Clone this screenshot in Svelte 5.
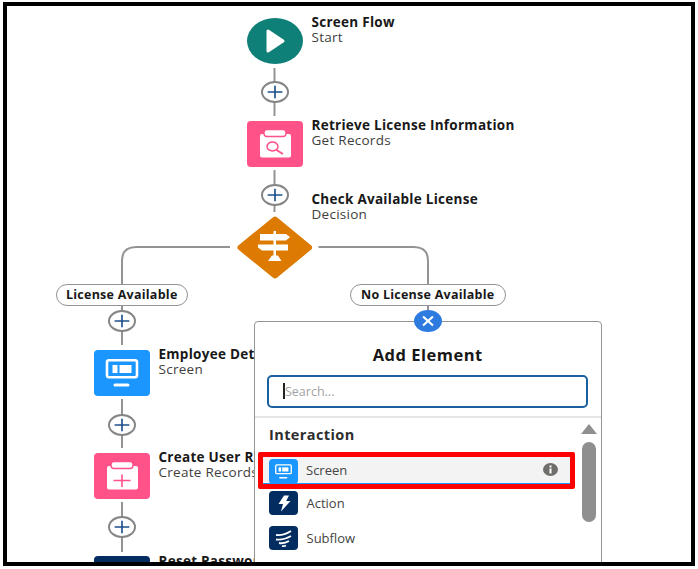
<script lang="ts">
  // canvas coordinates below are page pixels; the frame's inner corner sits at (7, 6)
  const ox = 7;
  const oy = 6;

  const pluses = [
    [274.5, 92], [274.5, 195],
    [122, 321], [122, 424.5], [122, 527]
  ];

  const labels = [
    { x: 311.5, y: 15, title: 'Screen Flow', sub: 'Start' },
    { x: 311.5, y: 118, title: 'Retrieve License Information', sub: 'Get Records' },
    { x: 311.5, y: 192, title: 'Check Available License', sub: 'Decision' },
    { x: 158.5, y: 347, title: 'Employee Details', sub: 'Screen' },
    { x: 158.5, y: 450, title: 'Create User Record', sub: 'Create Records' },
    { x: 158.5, y: 554, title: 'Reset Password', sub: '' }
  ];

  const pos = (x: number, y: number) => `left:${x - ox}px;top:${y - oy}px`;
</script>

{#snippet monitor()}
  <rect x="13" y="10.2" width="30" height="17" rx="2" fill="none" stroke="#fff" stroke-width="2.6" />
  <rect x="18.5" y="15" width="5" height="8" fill="#fff" />
  <rect x="25.5" y="15" width="12" height="8" fill="#fff" />
  <rect x="19.5" y="33.5" width="16" height="3" rx="1.5" fill="#fff" />
{/snippet}

{#snippet clipboard()}
  <rect x="13" y="13" width="31" height="23.500" rx="2" fill="#fff" />
  <rect x="17" y="8.500" width="22" height="7" rx="3" fill="#fff" stroke="#fe5288" stroke-width="1.4" />
{/snippet}

<div class="frame">
  <svg class="wires" viewBox="7 6 684 556" width="684" height="556" fill="none">
    <path d="M274.5 68V116M274.5 170V212" />
    <path d="M230 247H136Q122 247 122 261V284M122 306V345M122 399V448M122 502V552" />
    <path d="M318.5 247H414Q428 247 428 261V284M428 306V312" />
  </svg>

  <div class="node start" style={pos(246.5, 18)}>
    <svg viewBox="0 0 56 46" width="56" height="46"><path d="M21 13V33L36 23Z" fill="#fff" stroke="#fff" stroke-width="3" stroke-linejoin="round" /></svg>
  </div>

  <div class="node pink" style={pos(246.5, 121)}>
    <svg viewBox="0 0 56 46" width="56" height="46">
      {@render clipboard()}
      <ellipse cx="25.500" cy="25.500" rx="5.500" ry="4.500" fill="none" stroke="#fe5288" stroke-width="1.5" />
      <path d="M29.500 29L36 33" stroke="#fe5288" stroke-width="1.7" />
    </svg>
  </div>

  <svg class="node diamond" style={pos(237, 215.5)} viewBox="0 0 76 63" width="76" height="63">
    <path d="M38 3.500L72 31.500L38 59.500L3.500 31.500Z" fill="#dd7a01" stroke="#dd7a01" stroke-width="6" stroke-linejoin="round" />
    <path d="M23 18H49L53 21L49 24.500H23ZM21 28.500H51V34.500H25L21 31.500ZM36.500 15H39V40H36.500ZM31 45L35 39.500H41L44.500 45Z" fill="#fff" />
  </svg>

  <div class="node blue" style={pos(93.5, 349.5)}>
    <svg viewBox="0 0 56 46" width="56" height="46">{@render monitor()}</svg>
  </div>

  <div class="node pink" style={pos(93.5, 452.5)}>
    <svg viewBox="0 0 56 46" width="56" height="46">
      {@render clipboard()}
      <path d="M19.500 27.500H36.500M28 21.500V34" stroke="#fe5288" stroke-width="1.6" />
    </svg>
  </div>

  <div class="node navy" style={pos(93.5, 556)}></div>

  {#each pluses as [x, y]}
    <button class="plus" style={pos(x - 14, y - 11)} aria-label="Add element">
      <svg viewBox="0 0 28 22" width="24" height="18"><path d="M5 11H23M14 3.500V18.500" stroke="#1c4f8c" stroke-width="2" /></svg>
    </button>
  {/each}

  {#each labels as l}
    <div class="label" style={pos(l.x, l.y)}>
      <div class="title">{l.title}</div>
      {#if l.sub}<div class="sub">{l.sub}</div>{/if}
    </div>
  {/each}

  <div class="pill left" style={pos(55.5, 283.5)}>License Available</div>
  <div class="pill right" style={pos(350, 283.5)}>No License Available</div>

  <div class="popover" style={pos(254, 321)}>
    <h2>Add Element</h2>
    <div class="search">
      <span class="caret"></span>
      <input placeholder="Search..." />
    </div>
    <div class="list">
      <div class="items">
        <h3>Interaction</h3>
        <div class="row active">
          <svg class="tile sky" viewBox="0 0 56 46" width="29" height="25">{@render monitor()}</svg>
          <span>Screen</span>
          <svg class="info" viewBox="0 0 15 13" width="15" height="13">
            <ellipse cx="7.500" cy="6.500" rx="7.500" ry="6.500" fill="#706e6b" />
            <rect x="6.500" y="5.500" width="2" height="5" fill="#fff" />
            <rect x="6.500" y="2.500" width="2" height="2" fill="#fff" />
          </svg>
        </div>
        <div class="row">
          <svg class="tile dark" viewBox="0 0 29 24" width="29" height="24">
            <path d="M15 4.500H20L17.200 10H21.500L12 20.500L14 13H9.500Z" fill="#fff" />
          </svg>
          <span>Action</span>
        </div>
        <div class="row">
          <svg class="tile dark" viewBox="0 0 29 24" width="29" height="24" fill="none" stroke="#fff" stroke-width="1.8">
            <path d="M7 9Q14 10 22 5M7 13.500Q14 14.500 22 10M10 17Q15 18 20 15M13 20Q15 20.500 17 19.500" />
          </svg>
          <span>Subflow</span>
        </div>
      </div>
      <div class="scroll">
        <span class="arrow"></span>
        <span class="thumb"></span>
      </div>
    </div>
  </div>

  <button class="close" style={pos(414, 310)} aria-label="Close">
    <svg viewBox="0 0 14 12" width="14" height="12"><path d="M2 1.500L12 10.500M12 1.500L2 10.500" stroke="#fff" stroke-width="2.200" /></svg>
  </button>
</div>

<style>
  :global(body) {
    margin: 0;
    background: #fff;
    font-family: 'Open Sans', 'Liberation Sans', sans-serif;
    color: #181818;
  }

  .frame {
    position: relative;
    box-sizing: border-box;
    width: 692px;
    height: 564px;
    margin: 2px 0 0 3px;
    border: 4px solid #000;
    background: #fff;
    overflow: hidden;
  }

  .wires {
    position: absolute;
    left: 0;
    top: 0;
  }

  .wires path {
    stroke: #939393;
    stroke-width: 2;
  }

  .node {
    position: absolute;
    width: 56px;
    height: 46px;
    border-radius: 4px;
  }

  .node svg {
    display: block;
  }

  .start {
    background: #0f8078;
    border-radius: 50%;
  }

  .pink {
    background: #fe5288;
  }

  .blue {
    background: #1b96ff;
  }

  .navy {
    background: #032d60;
  }

  .diamond {
    width: 76px;
    height: 63px;
  }

  .plus {
    position: absolute;
    box-sizing: border-box;
    width: 28px;
    height: 22px;
    padding: 0;
    display: flex;
    align-items: center;
    justify-content: center;
    background: #fff;
    border: 2px solid #858585;
    border-radius: 50%;
  }

  .label {
    position: absolute;
    white-space: nowrap;
    font-size: 13.5px;
    letter-spacing: 0.27px;
    line-height: 16px;
  }

  .title {
    font-weight: 700;
    line-height: 14px;
    color: #181818;
  }

  .sub {
    color: #3e3e3c;
  }

  .pill {
    position: absolute;
    box-sizing: border-box;
    height: 22.5px;
    display: flex;
    align-items: center;
    justify-content: center;
    background: #fff;
    border: 1px solid #939393;
    border-radius: 12px;
    font-size: 12.5px;
    letter-spacing: 0.25px;
    font-weight: 700;
    white-space: nowrap;
  }

  .pill.left {
    width: 132.5px;
  }

  .pill.right {
    width: 155.5px;
  }

  .popover {
    position: absolute;
    box-sizing: border-box;
    width: 347.5px;
    height: 260px;
    background: #fff;
    border: 1px solid #939393;
    border-radius: 4px;
  }

  h2 {
    margin: 23px 0 10px;
    text-align: center;
    font-size: 16.5px;
    letter-spacing: 0.5px;
    line-height: 20px;
    font-weight: 700;
  }

  .search {
    position: relative;
    margin: 0 12.5px 8px 12px;
  }

  .search input {
    box-sizing: border-box;
    display: block;
    width: 100%;
    height: 33px;
    padding: 0 16px;
    background: #fff;
    border: 2px solid #1b5f9e;
    border-radius: 5px;
    outline: none;
    font: 12.500px 'Open Sans', sans-serif;
  }

  .search input::placeholder {
    color: #a3a3a3;
  }

  .caret {
    position: absolute;
    left: 16px;
    top: 8px;
    width: 1.5px;
    height: 16px;
    background: #222;
  }

  .list {
    display: flex;
    border-top: 2px solid #e5e5e5;
  }

  .items {
    flex: 1;
    padding: 0 0 0 2.500px;
  }

  h3 {
    margin: 8px 0 9px 11.500px;
    font-size: 14.500px;
    letter-spacing: 0.4px;
    line-height: 17px;
    font-weight: 700;
    color: #2e2e2e;
  }

  .row {
    display: flex;
    align-items: center;
    gap: 8.500px;
    height: 24px;
    padding: 0 8px 0 11.500px;
    margin-bottom: 10.500px;
    font-size: 13px;
    color: #444;
  }

  .row span {
    flex: 1;
  }

  .row.active {
    box-sizing: border-box;
    width: 317.500px;
    height: 36.500px;
    margin: 0 0 2.500px;
    padding: 0 12px 0 6px;
    background: #f3f3f3;
    border: 5px solid #f00;
    border-radius: 2px;
    align-items: flex-start;
    overflow: hidden;
    box-shadow: inset 0 -1px 0 #1b96ff;
  }

  .row.active span {
    line-height: 26px;
  }

  .tile {
    flex: none;
    border-radius: 4px;
    display: block;
  }

  .sky {
    background: #1b96ff;
    margin-top: 2px;
  }

  .dark {
    background: #032d60;
  }

  .info {
    margin-top: 6px;
  }

  .scroll {
    width: 27px;
    margin-right: 6px;
    padding-top: 6px;
    flex: none;
    display: flex;
    flex-direction: column;
    align-items: center;
    gap: 8px;
  }

  .arrow {
    width: 0;
    height: 0;
    border-left: 8.500px solid transparent;
    border-right: 8.500px solid transparent;
    border-bottom: 10px solid #8f8f8f;
  }

  .thumb {
    width: 14px;
    height: 80px;
    background: #8f8f8f;
    border-radius: 7px;
  }

  .close {
    position: absolute;
    width: 28px;
    height: 22px;
    padding: 0;
    display: flex;
    align-items: center;
    justify-content: center;
    background: #2e7be0;
    border: none;
    border-radius: 50%;
  }
</style>
